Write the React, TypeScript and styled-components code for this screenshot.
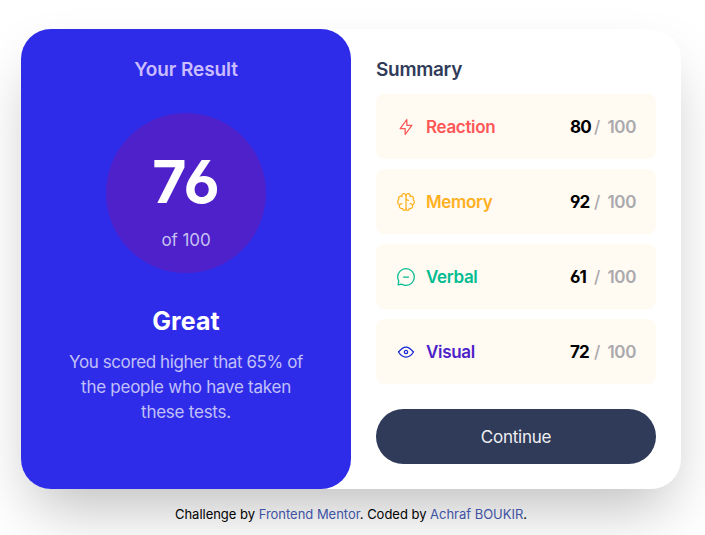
import React from "react";
import styled, { createGlobalStyle } from "styled-components";

const GlobalStyle = createGlobalStyle`
  * { box-sizing: border-box; }
  html, body { margin: 0; height: 535px; overflow: hidden; background: #fff; }
  body { font-family: "Inter", "Liberation Sans", sans-serif; font-size: 17px; }
  h1, h2, p { margin: 0; }
`;

const Page = styled.main`
  padding: 29px 24px 0 21px;
`;

const Card = styled.section`
  display: flex;
  width: 660px;
  height: 460px;
  border-radius: 30px;
  background: #fff;
  box-shadow: 0 30px 60px -12px rgba(0, 0, 0, 0.26);
`;

const ResultPanel = styled.div`
  display: flex;
  flex-direction: column;
  align-items: center;
  width: 330px;
  padding-top: 26px;
  border-radius: 30px;
  background: #2f2ce9;
  text-align: center;
`;

const SummaryPanel = styled.div`
  width: 330px;
  padding: 26px 25px 25px;
`;

const Title = styled.h2<{ $color: string; $spacing: string }>`
  height: 29px;
  line-height: 30px;
  font-size: 19px;
  font-weight: 600;
  letter-spacing: ${(p) => p.$spacing};
  color: ${(p) => p.$color};
`;

const ScoreCircle = styled.div`
  display: flex;
  flex-direction: column;
  align-items: center;
  width: 160px;
  height: 160px;
  margin-top: 29px;
  padding-top: 34px;
  border-radius: 50%;
  background: #4e21ca;
`;

const Score = styled.strong`
  height: 71px;
  line-height: 70px;
  font-size: 59px;
  font-weight: 700;
  letter-spacing: 0;
  font-feature-settings: "cv03";
  color: #fff;
`;

const OutOf = styled.span`
  height: 44px;
  line-height: 44px;
  font-size: 17px;
  letter-spacing: -0.1px;
  color: #c8c1f2;
`;

const Verdict = styled.h1`
  height: 36px;
  margin-top: 30px;
  line-height: 37px;
  font-size: 25px;
  font-weight: 700;
  letter-spacing: 0.1px;
  color: #fff;
`;

const Description = styled.p`
  width: 270px;
  margin-top: 11px;
  line-height: 25px;
  font-size: 17px;
  color: #c1c0f8;
`;

const DescriptionLine = styled.span<{ $spacing: string }>`
  display: block;
  letter-spacing: ${(p) => p.$spacing};
`;

const ScoreList = styled.div`
  display: grid;
  gap: 10px;
  margin-top: 10px;
`;

const ScoreRow = styled.div`
  display: flex;
  align-items: center;
  height: 65px;
  padding: 0 20px;
  border-radius: 8px;
  background: #fffaf2;
  line-height: 26px;
`;

const Icon = styled.svg`
  width: 20px;
  height: 20px;
  margin-right: 10px;
  fill: none;
  stroke-width: 1.25;
  stroke-linecap: round;
  stroke-linejoin: round;
`;

const Category = styled.span<{ $color: string }>`
  flex: 1;
  font-weight: 600;
  letter-spacing: -0.33px;
  color: ${(p) => p.$color};
`;

const Points = styled.span`
  width: 24px;
  font-weight: 700;
  letter-spacing: -0.9px;
  font-feature-settings: "cv03", "cv04";
`;

const Slash = styled.span`
  width: 13px;
  font-weight: 500;
  color: #aaa9ad;
`;

const Maximum = styled.span`
  width: 29px;
  text-align: right;
  white-space: nowrap;
  font-weight: 600;
  letter-spacing: -0.4px;
  color: #aaa9ad;
`;

const ContinueButton = styled.button`
  display: block;
  width: 280px;
  height: 55px;
  margin-top: 25px;
  padding: 0;
  border: 0;
  border-radius: 28px;
  background: #303b5a;
  color: #eeeff2;
  font-family: inherit;
  font-size: 17px;
  letter-spacing: -0.25px;
`;

const Footer = styled.footer`
  width: 660px;
  margin-top: 15px;
  line-height: 20px;
  text-align: center;
  font-size: 13px;
  letter-spacing: -0.02px;
`;

const FooterLink = styled.a`
  color: #3e52a3;
  text-decoration: none;
`;

const categories = [
  {
    name: "Reaction",
    score: 80,
    color: "#ff5757",
    stroke: "#ff5555",
    paths: ["M10.833 8.333V2.5l-6.666 9.167h5V17.5l6.666-9.167h-5Z"],
  },
  {
    name: "Memory",
    score: 92,
    color: "#ffb01f",
    stroke: "#ffb21e",
    paths: [
      "M5.833 11.667a2.5 2.5 0 1 0 .834 4.858",
      "M3.553 13.004a3.333 3.333 0 0 1-.728-5.53m.025-.067a2.083 2.083 0 0 1 2.983-2.824m.199.054A2.083 2.083 0 1 1 10 3.75v12.917a1.667 1.667 0 0 1-3.333 0M10 5.833a2.5 2.5 0 0 0 2.5 2.5m1.667 3.334a2.5 2.5 0 1 1-.834 4.858",
      "M16.447 13.004a3.334 3.334 0 0 0 .728-5.53m-.025-.067a2.083 2.083 0 0 0-2.983-2.824M10 3.75a2.085 2.085 0 0 1 2.538-2.033 2.084 2.084 0 0 1 1.43 2.92m-.635 12.03a1.667 1.667 0 0 1-3.333 0",
    ],
  },
  {
    name: "Verbal",
    score: 61,
    color: "#00bd91",
    stroke: "#00bb8f",
    paths: [
      "M7.5 10h5M10 18.333A8.333 8.333 0 1 0 1.667 10c0 1.518.406 2.942 1.115 4.167l-.699 3.75 3.75-.699A8.295 8.295 0 0 0 10 18.333Z",
    ],
  },
  {
    name: "Visual",
    score: 72,
    color: "#4e21ca",
    stroke: "#1125d6",
    paths: [
      "M10 11.667a1.667 1.667 0 1 0 0-3.334 1.667 1.667 0 0 0 0 3.334Z",
      "M17.5 10c-1.574 2.492-4.402 5-7.5 5s-5.926-2.508-7.5-5C4.416 7.632 6.66 5 10 5s5.584 2.632 7.5 5Z",
    ],
  },
];

export default function App() {
  return (
    <>
      <GlobalStyle />
      <Page>
        <Card>
          <ResultPanel>
            <Title $color="#cabdff" $spacing="-0.1px">Your Result</Title>
            <ScoreCircle>
              <Score>76</Score>
              <OutOf>of 100</OutOf>
            </ScoreCircle>
            <Verdict>Great</Verdict>
            <Description>
              <DescriptionLine $spacing="-0.4px">You scored higher that 65% of</DescriptionLine>
              <DescriptionLine $spacing="-0.26px">the people who have taken</DescriptionLine>
              <DescriptionLine $spacing="-0.24px">these tests.</DescriptionLine>
            </Description>
          </ResultPanel>
          <SummaryPanel>
            <Title $color="#303b5a" $spacing="-0.3px">Summary</Title>
            <ScoreList>
              {categories.map((c) => (
                <ScoreRow key={c.name}>
                  <Icon viewBox="0 0 20 20" stroke={c.stroke}>
                    {c.paths.map((d) => (
                      <path key={d} d={d} />
                    ))}
                  </Icon>
                  <Category $color={c.color}>{c.name}</Category>
                  <Points>{c.score}</Points>
                  <Slash>/</Slash>
                  <Maximum>100</Maximum>
                </ScoreRow>
              ))}
            </ScoreList>
            <ContinueButton>Continue</ContinueButton>
          </SummaryPanel>
        </Card>
        <Footer>
          Challenge by <FooterLink>Frontend Mentor</FooterLink>. Coded by{" "}
          <FooterLink>Achraf BOUKIR</FooterLink>.
        </Footer>
      </Page>
    </>
  );
}
